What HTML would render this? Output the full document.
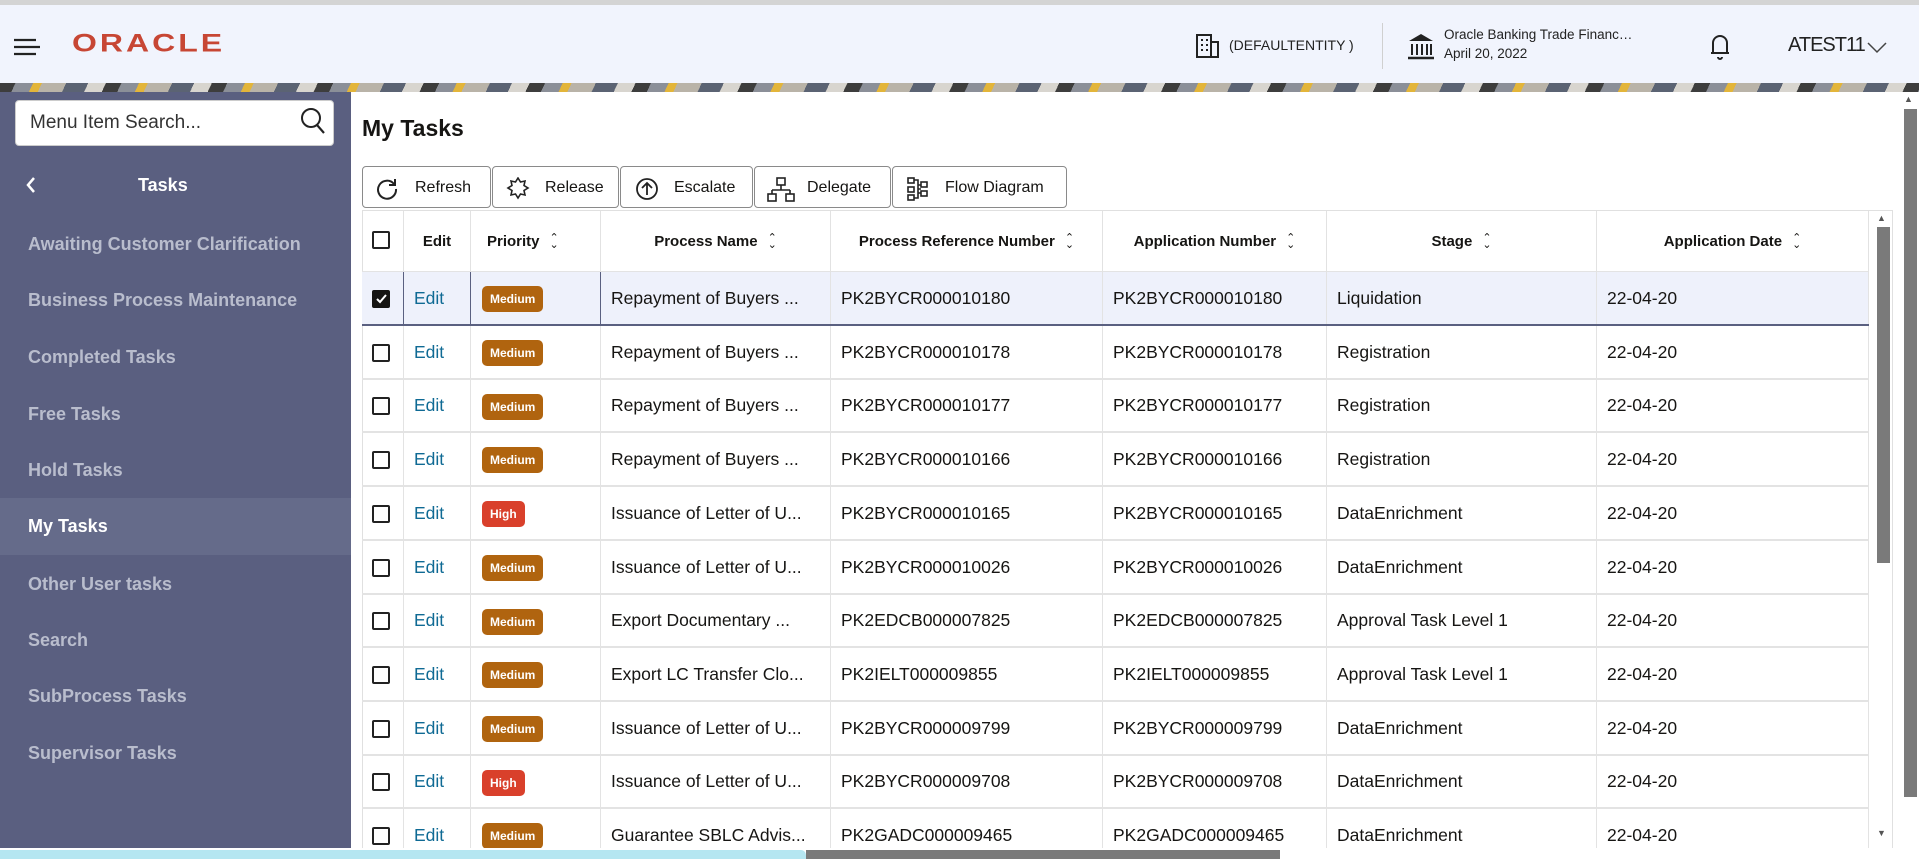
<!DOCTYPE html>
<html><head><meta charset="utf-8"><style>
*{box-sizing:border-box;margin:0;padding:0}
body{width:1919px;height:859px;overflow:hidden;position:relative;background:#fff;font-family:"Liberation Sans",sans-serif;color:#161513}
.a{position:absolute}
#hdr{left:0;top:0;width:1919px;height:83px;background:#f1f4fd;border-top:5px solid #d4d4d4}
#band{left:0;top:83px;width:1919px;height:9px;background:repeating-linear-gradient(115deg,#3d3d3d 0 14px,#8b8f98 14px 30px,#e3b53a 30px 38px,#b9b3a8 38px 60px,#5b6373 60px 80px,#d8d5cf 80px 96px)}
#side{left:0;top:92px;width:351px;height:756px;background:#5a5f80}
.mi{position:absolute;left:0;width:351px;height:57px;line-height:57px;padding-left:28px;font-weight:bold;font-size:18px;color:#b9bdcd}
.btn{position:absolute;top:166px;height:42px;border:1px solid #8a8a8a;border-radius:4px;background:#fff;font-size:16px;line-height:42px;color:#161513}
.btn svg{position:absolute;top:10px}
.th{position:absolute;top:211px;height:61px;line-height:61px;font-weight:bold;font-size:15px;border-right:1px solid #e2e2e2}
.row{position:absolute;left:362px;width:1507px;height:54px;border-bottom:2px solid #e3e3e3;font-size:17.5px}
.c{position:absolute;top:0;height:52px;line-height:52px;border-right:1px solid #e3e3e3;white-space:nowrap;overflow:hidden}
.cb{position:absolute;left:10px;top:18px;width:18px;height:18px;border:2px solid #222;border-radius:2px;background:#fff}
.bd{display:inline-block;height:26px;line-height:26px;padding:0 8px;border-radius:5px;color:#fff;font-size:12px;font-weight:bold;vertical-align:middle}
.m{background:#b0640f}.h{background:#d9402b}
.srt{display:inline-block;margin-left:10px;font-size:11px;vertical-align:middle;line-height:7px;font-weight:normal}
</style></head><body>
<div id="hdr" class="a">
 <svg class="a" style="left:14px;top:33px" width="26" height="18"><path d="M0 2H22M0 9H26M0 16H22" stroke="#222" stroke-width="2.2"/></svg>
 <div class="a" style="left:72px;top:20px;font-size:32px;font-weight:bold;color:#c74634;letter-spacing:3px;transform:scaleY(.78);transform-origin:left">ORACLE</div>
 <svg class="a" style="left:1196px;top:28px" width="24" height="26"><rect x="1" y="2" width="14" height="22" fill="none" stroke="#222" stroke-width="2"/><rect x="15" y="9" width="7" height="15" fill="none" stroke="#222" stroke-width="2"/><path d="M5 7h2M10 7h2M5 12h2M10 12h2M5 17h2M10 17h2" stroke="#222" stroke-width="2"/></svg>
 <div class="a" style="left:1229px;top:32px;font-size:14px;color:#222">(DEFAULTENTITY )</div>
 <div class="a" style="left:1382px;top:18px;width:1px;height:46px;background:#d0d0d0"></div>
 <svg class="a" style="left:1407px;top:27px" width="28" height="28"><path d="M2 9L14 2L26 9Z" fill="#222"/><path d="M5 12v11M10 12v11M15 12v11M20 12v11M24 12v11" stroke="#222" stroke-width="2"/><path d="M1 26H27" stroke="#222" stroke-width="2.5"/></svg>
 <div class="a" style="left:1444px;top:22px;font-size:13.5px;color:#222">Oracle Banking Trade Financ…</div>
 <div class="a" style="left:1444px;top:41px;font-size:13.5px;color:#222">April 20, 2022</div>
 <svg class="a" style="left:1709px;top:27px" width="22" height="28"><path d="M4 21V11a7 7 0 0 1 14 0v10H2h18" fill="none" stroke="#222" stroke-width="2"/><path d="M9 25a2 2 0 0 0 4 0" fill="none" stroke="#222" stroke-width="2"/></svg>
 <div class="a" style="left:1788px;top:29px;font-size:20px;color:#222;letter-spacing:-1px">ATEST11</div>
 <svg class="a" style="left:1867px;top:37px" width="20" height="12"><path d="M1 1L10 10L19 1" fill="none" stroke="#444" stroke-width="1.5"/></svg>
</div>
<div id="band" class="a"></div>
<div id="side" class="a">
 <div class="a" style="left:15px;top:8px;width:319px;height:46px;background:#fff;border-radius:4px;border:1px solid #ccc"></div>
 <div class="a" style="left:30px;top:20px;font-size:19px;color:#333">Menu Item Search...</div>
 <svg class="a" style="left:299px;top:14px" width="28" height="30"><circle cx="12" cy="12" r="9" fill="none" stroke="#222" stroke-width="2"/><path d="M18 19L25 27" stroke="#222" stroke-width="2.2"/></svg>
 <svg class="a" style="left:25px;top:84px" width="12" height="18"><path d="M9 2L3 9L9 16" fill="none" stroke="#fff" stroke-width="2.5"/></svg>
 <div class="a" style="left:138px;top:83px;font-size:18px;font-weight:bold;color:#fff">Tasks</div>
 <div class="mi" style="top:124px">Awaiting Customer Clarification</div>
 <div class="mi" style="top:180px">Business Process Maintenance</div>
 <div class="mi" style="top:237px">Completed Tasks</div>
 <div class="mi" style="top:294px">Free Tasks</div>
 <div class="mi" style="top:350px">Hold Tasks</div>
 <div class="mi" style="top:406px;background:#656b8a;color:#fff">My Tasks</div>
 <div class="mi" style="top:464px">Other User tasks</div>
 <div class="mi" style="top:520px">Search</div>
 <div class="mi" style="top:576px">SubProcess Tasks</div>
 <div class="mi" style="top:633px">Supervisor Tasks</div>
</div>
<div class="a" style="left:362px;top:115px;font-size:23px;font-weight:bold">My Tasks</div>
<div class="btn" style="left:362px;width:129px"><svg style="left:12px" width="24" height="24"><path d="M19 7A9 9 0 1 0 21 12" fill="none" stroke="#222" stroke-width="2"/><path d="M20 2v6h-6" fill="none" stroke="#222" stroke-width="2"/></svg><span style="position:absolute;left:52px">Refresh</span></div>
<div class="btn" style="left:492px;width:127px"><svg style="left:13px" width="24" height="24"><path d="M12 1l2.5 4 4.5-1-1 4.5 4 2.5-4 2.5 1 4.5-4.5-1-2.5 4-2.5-4-4.5 1 1-4.5-4-2.5 4-2.5-1-4.5 4.5 1z" fill="none" stroke="#222" stroke-width="1.6"/></svg><span style="position:absolute;left:52px">Release</span></div>
<div class="btn" style="left:620px;width:133px"><svg style="left:14px" width="24" height="24"><circle cx="12" cy="12" r="10" fill="none" stroke="#222" stroke-width="1.8"/><path d="M12 18V6M7 11l5-5 5 5" fill="none" stroke="#222" stroke-width="1.8"/></svg><span style="position:absolute;left:53px">Escalate</span></div>
<div class="btn" style="left:754px;width:137px"><svg style="left:12px" width="28" height="26"><rect x="10" y="1" width="8" height="7" fill="none" stroke="#222" stroke-width="1.6"/><path d="M14 8v5M5 13h18M5 13v4M23 13v4" fill="none" stroke="#222" stroke-width="1.6"/><rect x="1" y="17" width="8" height="7" fill="none" stroke="#222" stroke-width="1.6"/><rect x="19" y="17" width="8" height="7" fill="none" stroke="#222" stroke-width="1.6"/></svg><span style="position:absolute;left:52px">Delegate</span></div>
<div class="btn" style="left:892px;width:175px"><svg style="left:14px" width="22" height="24"><g fill="none" stroke="#222" stroke-width="1.6"><rect x="1" y="1" width="6" height="5"/><rect x="1" y="10" width="6" height="5"/><rect x="1" y="18" width="6" height="5"/><rect x="14" y="5" width="6" height="5"/><rect x="14" y="14" width="6" height="5"/><path d="M7 3h4v18H7M11 12h3M11 8h3M11 16h3"/></g></svg><span style="position:absolute;left:52px">Flow Diagram</span></div>
<div class="a" style="left:362px;top:210px;width:1531px;height:640px;border:1px solid #e0e0e0;border-bottom:none"></div>
<div class="a" style="left:362px;top:271px;width:1507px;height:1px;background:#e3e3e3"></div>
<div class="th" style="left:362px;width:42px"><span class="cb" style="top:20px;left:10px"></span></div>
<div class="th" style="left:404px;width:67px;text-align:center">Edit</div>
<div class="th" style="left:471px;width:130px;padding-left:16px">Priority<span class="srt">⌃<br>⌄</span></div>
<div class="th" style="left:601px;width:230px;text-align:center">Process Name<span class="srt">⌃<br>⌄</span></div>
<div class="th" style="left:831px;width:272px;text-align:center">Process Reference Number<span class="srt">⌃<br>⌄</span></div>
<div class="th" style="left:1103px;width:224px;text-align:center">Application Number<span class="srt">⌃<br>⌄</span></div>
<div class="th" style="left:1327px;width:270px;text-align:center">Stage<span class="srt">⌃<br>⌄</span></div>
<div class="th" style="left:1597px;width:272px;text-align:center">Application Date<span class="srt">⌃<br>⌄</span></div>
<div class="a" style="left:362px;top:272px;width:1507px;height:576px;overflow:hidden">
<div id="rows"></div>
</div>
<div class="a" style="left:1877px;top:213px;font-size:9px;color:#555">▲</div>
<div class="a" style="left:1877px;top:227px;width:13px;height:336px;background:#7a7a7a"></div>
<div class="a" style="left:1877px;top:828px;font-size:9px;color:#555">▼</div>
<div class="a" style="left:1904px;top:94px;font-size:9px;color:#555">▲</div>
<div class="a" style="left:1904px;top:109px;width:13px;height:688px;background:#7a7a7a"></div>
<div class="a" style="left:0;top:848px;width:1919px;height:11px;background:#fff"></div>
<div class="a" style="left:0;top:850px;width:806px;height:9px;background:#b5e6f1;border-radius:0 5px 0 0"></div>
<div class="a" style="left:806px;top:850px;width:474px;height:9px;background:#7a7a7a"></div>
<script>
var d=[["Repayment of Buyers ...","PK2BYCR000010180","Liquidation","m"],
["Repayment of Buyers ...","PK2BYCR000010178","Registration","m"],
["Repayment of Buyers ...","PK2BYCR000010177","Registration","m"],
["Repayment of Buyers ...","PK2BYCR000010166","Registration","m"],
["Issuance of Letter of U...","PK2BYCR000010165","DataEnrichment","h"],
["Issuance of Letter of U...","PK2BYCR000010026","DataEnrichment","m"],
["Export Documentary ...","PK2EDCB000007825","Approval Task Level 1","m"],
["Export LC Transfer Clo...","PK2IELT000009855","Approval Task Level 1","m"],
["Issuance of Letter of U...","PK2BYCR000009799","DataEnrichment","m"],
["Issuance of Letter of U...","PK2BYCR000009708","DataEnrichment","h"],
["Guarantee SBLC Advis...","PK2GADC000009465","DataEnrichment","m"]];
var h="";
d.forEach(function(r,i){
 var sel=i==0;
 var bc=sel?"#5a6080":"#e3e3e3";
 h+='<div class="row" style="left:0;top:'+(i*53.7)+'px;'+(sel?'background:#eef1fb;border-bottom-color:#5a6080;':'')+'">'+
 '<div class="c" style="left:0;width:42px;border-right-color:'+bc+'">'+(sel?'<span class="cb" style="background:#161513;border-color:#161513"><svg width="14" height="14" style="position:absolute;left:0;top:0"><path d="M3 7l3 3 6-7" fill="none" stroke="#fff" stroke-width="2"/></svg></span>':'<span class="cb"></span>')+'</div>'+
 '<div class="c" style="left:42px;width:67px;padding-left:10px;color:#0f6a94;border-right-color:'+bc+'">Edit</div>'+
 '<div class="c" style="left:109px;width:130px;padding-left:11px;border-right-color:'+bc+'"><span class="bd '+r[3]+'">'+(r[3]=="m"?"Medium":"High")+'</span></div>'+
 '<div class="c" style="left:239px;width:230px;padding-left:10px">'+r[0]+'</div>'+
 '<div class="c" style="left:469px;width:272px;padding-left:10px">'+r[1]+'</div>'+
 '<div class="c" style="left:741px;width:224px;padding-left:10px">'+r[1]+'</div>'+
 '<div class="c" style="left:965px;width:270px;padding-left:10px">'+r[2]+'</div>'+
 '<div class="c" style="left:1235px;width:272px;padding-left:10px">22-04-20</div></div>';
});
document.getElementById("rows").innerHTML=h;
</script>
</body></html>
